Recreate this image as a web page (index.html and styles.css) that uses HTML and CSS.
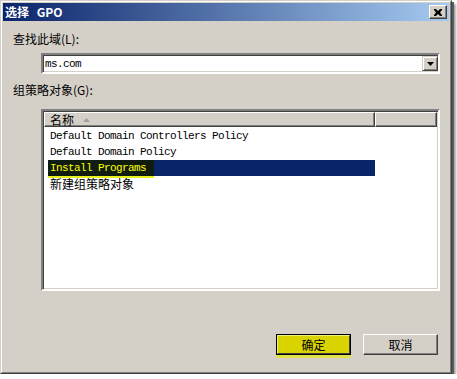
FILE: index.html
```
<!DOCTYPE html>
<html>
<head>
<meta charset="utf-8">
<link rel="stylesheet" href="styles.css">
</head>
<body>
<div class="window">
  <div class="frame">
    <div class="titlebar">
      <span class="title">选择 GPO</span>
      <div class="close"><svg width="8" height="7" viewBox="0 0 8 7"><path d="M0 0h2l2 2 2-2h2v1l-2 2.5 2 2.5v1h-2l-2-2-2 2h-2v-1l2-2.5-2-2.5z" fill="#000"/></svg></div>
    </div>
    <div class="content">
      <div class="label first">查找此域(L):</div>
      <div class="combo">
        <span class="mono combo-text">ms.com</span>
        <div class="drop"><svg width="7" height="4" viewBox="0 0 7 4"><path d="M0 0h7l-3.5 4z" fill="#000"/></svg></div>
      </div>
      <div class="label second">组策略对象(G):</div>
      <div class="list">
        <div class="header">
          <div class="col col1"><span class="cjk">名称</span><svg class="sort" width="7" height="4" viewBox="0 0 7 4"><path d="M3.5 0L7 4H0z" fill="#a0a0a0"/></svg></div>
          <div class="col col2"></div>
        </div>
        <div class="rows">
          <div class="row mono">Default Domain Controllers Policy</div>
          <div class="row mono">Default Domain Policy</div>
          <div class="row mono selected"><span class="marked">Install Programs</span></div>
          <div class="row cjk">新建组策略对象</div>
        </div>
      </div>
      <div class="buttons">
        <div class="btn default"><div class="btn-inner">确定</div></div>
        <div class="btn"><div class="btn-inner">取消</div></div>
      </div>
    </div>
  </div>
</div>
</body>
</html>
```
FILE: styles.css
```
html, body {
  margin: 0;
  padding: 0;
  background: #ffffff;
}
body {
  font-family: "Noto Sans CJK SC", "Liberation Sans", sans-serif;
  font-size: 12px;
  color: #000;
}
.window {
  width: 450px;
  height: 372px;
  border: 1px solid;
  border-color: #d4d0c8 #404040 #404040 #d4d0c8;
  box-shadow: 2px 2px 0 #5a5a5a, 4px 4px 2px rgba(0,0,0,0.35);
}
.frame {
  height: 368px;
  border: 1px solid;
  border-color: #ffffff #808080 #808080 #ffffff;
  padding: 1px;
  background: #d4d0c8;
  display: flex;
  flex-direction: column;
}
.titlebar {
  height: 18px;
  background: linear-gradient(to right, #0a246a, #a6caf0);
  display: flex;
  align-items: center;
  justify-content: space-between;
  padding: 0 2px 0 2px;
}
.title {
  color: #fff;
  font-weight: bold;
  font-size: 12px;
  line-height: 14px;
  word-spacing: 5px;
}
.close {
  width: 12px;
  height: 10px;
  background: #d4d0c8;
  border: 1px solid;
  border-color: #ffffff #404040 #404040 #ffffff;
  box-shadow: inset -1px -1px 0 #808080;
  padding: 1px 2px;
  display: flex;
  align-items: center;
  justify-content: center;
}
.content {
  flex: 1;
  display: flex;
  flex-direction: column;
  padding: 0 9px 0 10px;
}
.label {
  line-height: 14px;
  height: 14px;
}
.label.first { margin-top: 11px; }
.label.second { margin-top: 9px; }
.mono {
  font-family: "Liberation Mono", "DejaVu Sans Mono", monospace;
  font-size: 11px;
  letter-spacing: -0.6px;
}
.cjk {
  font-family: "Noto Sans CJK SC", sans-serif;
  font-size: 12px;
}
.combo {
  margin-top: 7px;
  margin-left: 28px;
  height: 17px;
  background: #fff;
  border: 2px solid;
  border-color: #808080 #ffffff #ffffff #808080;
  box-shadow: inset 1px 1px 0 #404040, inset -1px -1px 0 #d4d0c8;
  display: flex;
  align-items: center;
  justify-content: space-between;
  padding-left: 2px;
}
.combo-text {
  line-height: 14px;
}
.drop {
  width: 12px;
  height: 13px;
  background: #d4d0c8;
  border: 1px solid;
  border-color: #d4d0c8 #404040 #404040 #d4d0c8;
  box-shadow: inset 1px 1px 0 #fff, inset -1px -1px 0 #808080;
  padding: 0 1px;
  display: flex;
  align-items: center;
  justify-content: center;
}
.list {
  margin-top: 12px;
  margin-left: 28px;
  height: 176px;
  background: #fff;
  border: 2px solid;
  border-color: #808080 #ffffff #ffffff #808080;
  box-shadow: inset 1px 1px 0 #404040, inset -1px -1px 0 #d4d0c8;
  padding: 1px;
  display: flex;
  flex-direction: column;
}
.header {
  display: flex;
  height: 15px;
}
.col {
  background: #d4d0c8;
  border-top: 1px solid #fff;
  border-left: 1px solid #fff;
  border-right: 1px solid #404040;
  border-bottom: 1px solid #404040;
  box-shadow: inset -1px -1px 0 #808080;
  box-sizing: border-box;
  height: 15px;
}
.col1 {
  width: 331px;
  display: flex;
  align-items: center;
  padding-left: 5px;
  line-height: 13px;
}
.col2 {
  flex: 1;
}
.sort {
  margin-left: 9px;
}
.rows {
  display: flex;
  flex-direction: column;
  padding-top: 1px;
  padding-left: 4px;
}
.row {
  height: 16px;
  line-height: 16px;
  padding-left: 2px;
  width: 325px;
  white-space: pre;
}
.selected {
  background: #0a246a;
  color: #ffff00;
}
.marked {
  display: inline-block;
  background: #101c10;
  height: 16px;
  padding-right: 8px;
  margin-left: -2px;
  padding-left: 2px;
  box-shadow: 0 2px 0 #e8f020;
}
.buttons {
  margin-top: 43px;
  display: flex;
  justify-content: flex-end;
  gap: 12px;
  padding-right: 2px;
}
.btn {
  width: 75px;
  height: 21px;
  box-sizing: border-box;
  border: 1px solid;
  border-color: #ffffff #404040 #404040 #ffffff;
  background: #d4d0c8;
  box-shadow: inset -1px -1px 0 #808080;
}
.btn-inner {
  height: 100%;
  display: flex;
  align-items: center;
  justify-content: center;
  font-size: 12px;
}
.btn.default {
  border: 1px solid #000;
  box-shadow: 0 3px 0 0 #e0e048;
  background: #d9d400;
}
.btn.default .btn-inner {
  border: 1px solid;
  border-color: #f0ee80 #404040 #404040 #f0ee80;
  box-sizing: border-box;
}
```
